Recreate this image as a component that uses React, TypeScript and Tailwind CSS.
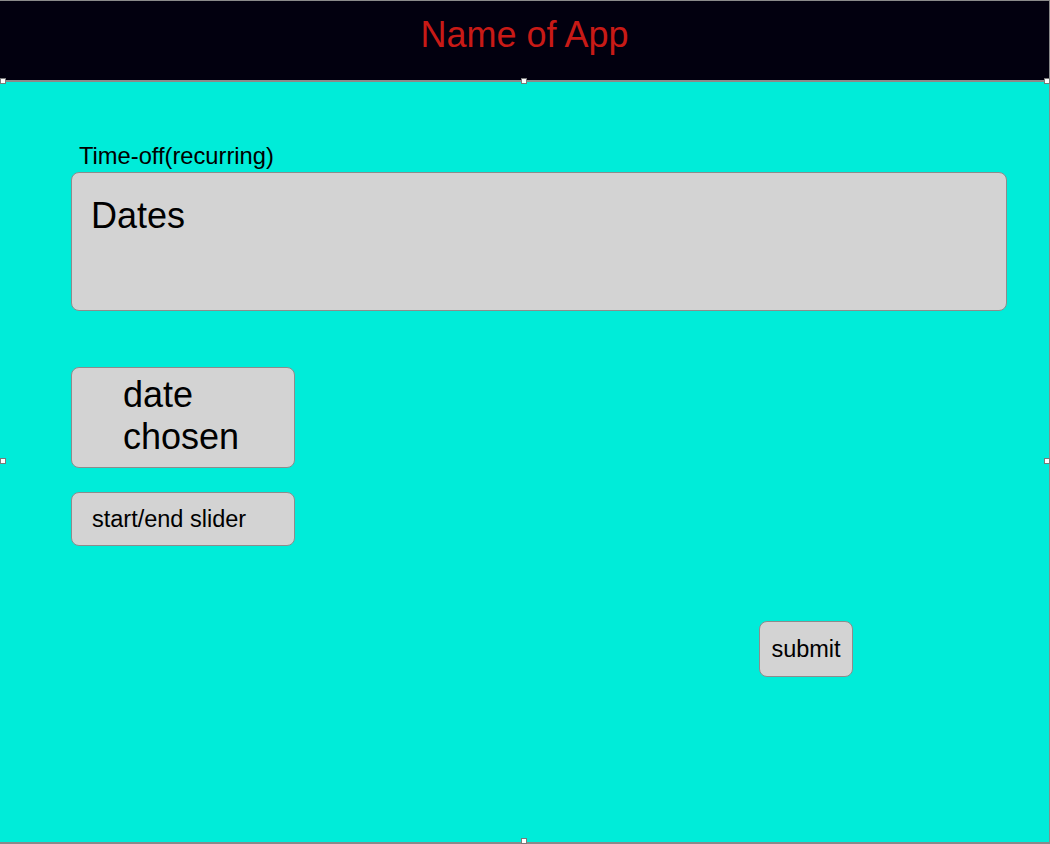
export default function App() {
  const handles = [
    "left-0 top-[78px]",
    "left-[521px] top-[78px]",
    "right-0 top-[78px]",
    "left-0 top-[458px]",
    "right-0 top-[458px]",
    "left-[521px] bottom-0",
  ];

  return (
    <div
      className="relative w-[1050px] h-[844px] overflow-hidden bg-white"
      style={{ fontFamily: '"Liberation Sans", Arial, sans-serif' }}
    >
      <header className="h-[80px] border-t border-[#8a8a8a] bg-[#02000f] flex items-center justify-center border-r">
        <h1 className="text-[36px] leading-none text-[#c81a16] -mt-[12px]">Name of App</h1>
      </header>

      <main className="h-[764px] border-t-2 border-b-2 border-r border-[#8a8a8a] bg-[#00ecd9] pt-[62px] pl-[71px] flex flex-col items-start">
        <label className="ml-[8px] text-[23.7px] leading-[24px] text-black">Time-off(recurring)</label>

        <div className="mt-[4px] w-[936px] h-[139px] rounded-[8px] border border-[#8c8c8c] bg-[#d3d3d3] pt-[22px] pl-[19px]">
          <span className="text-[36px] leading-[41px] text-black">Dates</span>
        </div>

        <div className="mt-[56px] w-[224px] h-[101px] rounded-[8px] border border-[#8c8c8c] bg-[#d3d3d3] pt-[6px] pl-[51px]">
          <p className="text-[36px] leading-[42px] text-black">
            date
            <br />
            chosen
          </p>
        </div>

        <div className="mt-[24px] w-[224px] h-[54px] rounded-[8px] border border-[#8c8c8c] bg-[#d3d3d3] pl-[20px] pt-[1px] flex items-center">
          <span className="text-[23.5px] text-black">start/end slider</span>
        </div>

        <button className="mt-[75px] ml-[688px] w-[94px] h-[56px] rounded-[8px] border border-[#8c8c8c] bg-[#d3d3d3] pt-[1px] text-[23.5px] text-black">
          submit
        </button>
      </main>

      {handles.map((pos) => (
        <div
          key={pos}
          className={`absolute ${pos} w-[6px] h-[6px] bg-white border border-[#7a7a7a]`}
        />
      ))}
    </div>
  );
}
